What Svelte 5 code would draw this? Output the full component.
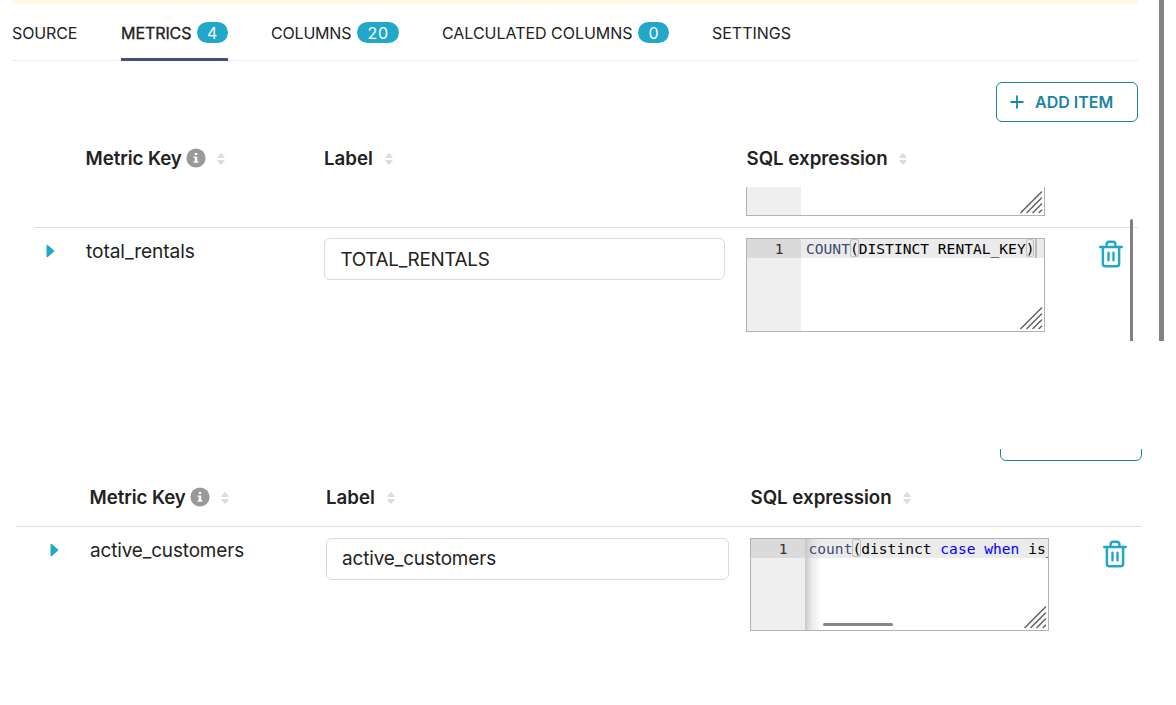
<script>
  const tabs = [
    { name: 'SOURCE', width: 65.4 },
    { name: 'METRICS', count: 4, active: true, width: 70.5 },
    { name: 'COLUMNS', count: 20, width: 80.5 },
    { name: 'CALCULATED COLUMNS', count: 0, width: 190.5 },
    { name: 'SETTINGS', width: 79 },
  ];
  const columns = ['Metric Key', 'Label', 'SQL expression'];
  const first = {
    key: 'total_rentals',
    label: 'TOTAL_RENTALS',
    code: [['fn', 'COUNT'], ['paren', '('], ['', 'DISTINCT RENTAL_KEY'], ['paren', ')']],
    cursor: true,
  };
  const second = {
    key: 'active_customers',
    label: 'active_customers',
    code: [['fn', 'count'], ['paren', '('], ['', 'distinct '], ['kw', 'case'], ['', ' '], ['kw', 'when'], ['', ' is_']],
    scrolled: true,
  };
</script>

{#snippet grip()}
  <svg class="grip" width="24" height="24" viewBox="0 0 24 24">
    <path d="M1 21.5 21.5 1M7 21.5 21.5 7M13 21.5 21.5 13M19.2 21.5 21.5 19.2" />
  </svg>
{/snippet}

{#snippet header()}
  <div class="grid header">
    <span></span>
    {#each columns as name, i}
      <div class="th">
        <span class:tight={i === 0}>{name}</span>
        {#if i === 0}
          <svg class="info" width="20" height="20" viewBox="0 0 20 20">
            <circle cx="10" cy="10" r="9.6" fill="#999" />
            <path d="M8.8 5h2.4v2.1H8.8zM7.6 8.4h3.6v4.8h1.2v1.5H7.6v-1.5h1.2V9.9H7.6z" fill="#fff" />
          </svg>
        {/if}
        <svg class="sort" width="8" height="12" viewBox="0 0 8 12">
          <path d="M4 0 7.5 3.8Q8 5 7 5H1Q0 5 .5 3.8zM4 12 7.5 8.2Q8 7 7 7H1Q0 7 .5 8.2z" fill="#dcdcdc" />
        </svg>
      </div>
    {/each}
  </div>
{/snippet}

{#snippet row(metric)}
  <div class="grid row">
    <svg class="caret" width="9" height="14" viewBox="0 0 9 14">
      <path d="M.5 1.8Q.5.2 1.8 1L7.8 6.2Q8.6 7 7.8 7.8L1.8 13Q.5 13.8.5 12.2z" fill="#20a7c9" />
    </svg>
    <span class="key">{metric.key}</span>
    <div class="input">{metric.label}</div>
    <div class="editor">
      <div class="gutter"><span class="num">1</span></div>
      <div class="code" class:scrolled={metric.scrolled}>
        <div class="line">{#each metric.code as [kind, text]}<span class={kind}>{text}</span>{/each}{#if metric.cursor}<i class="cursor"></i>{/if}</div>
        {#if metric.scrolled}<div class="hbar"></div>{/if}
      </div>
      {@render grip()}
    </div>
    <svg class="trash" width="24" height="28" viewBox="0 0 24 28">
      <g fill="none" stroke="#20a7c9" stroke-linecap="round" stroke-linejoin="round">
        <path d="M1.2 7H22.8" stroke-width="2.4" />
        <path d="M3.9 7V23.8Q3.9 26.3 6.4 26.3H17.6Q20.1 26.3 20.1 23.8V7" stroke-width="2.5" />
        <path d="M7.6 6.5V4.5Q7.6 1.7 10.2 1.7H13.8Q16.4 1.7 16.4 4.5V6.5" stroke-width="2.4" />
        <path d="M9.5 12.8V20.2M14.5 12.8V20.2" stroke-width="2.4" />
      </g>
    </svg>
  </div>
{/snippet}

<div class="page">
  <section class="top">
    <div class="main">
      <div class="banner"></div>
      <nav>
        {#each tabs as tab}
          <div class="tab" class:active={tab.active}>
            <svg class="name" height="24" style:width="{tab.width}px"><text x="0" y="19.5" textLength={tab.width}>{tab.name}</text></svg>
            {#if tab.count !== undefined}<span class="badge">{tab.count}</span>{/if}
          </div>
        {/each}
      </nav>
      <div class="actions">
        <button class="add">
          <svg width="14" height="14" viewBox="0 0 14 14"><path d="M7 .5V13.5M.5 7H13.5" stroke="#1a85a0" stroke-width="1.8" /></svg>
          <span>ADD ITEM</span>
        </button>
      </div>
      {@render header()}
      <div class="rows">
        <div class="grid partial">
          <div class="editor stub"><div class="gutter"></div>{@render grip()}</div>
        </div>
        {@render row(first)}
      </div>
    </div>
    <div class="vbar"></div>
    <div class="pagebar"></div>
  </section>

  <section class="bottom">
    <div class="cut"><div class="add"></div></div>
    {@render header()}
    {@render row(second)}
  </section>
</div>

<style>
  :global(body) { margin: 0; background: #fff; }
  .page {
    width: 1176px; height: 705px; overflow: hidden; background: #fff;
    font-family: Inter, sans-serif; color: #222; display: flex; flex-direction: column; gap: 108px;
  }
  .page * { box-sizing: border-box; }
  svg { display: block; flex: none; }
  .top { height: 341px; position: relative; display: flex; flex: none; overflow: hidden; justify-content: space-between; padding-right: 12px; }
  .main { width: 1138px; }
  .banner { height: 4px; margin-left: 12px; background: #fff8e3; border-radius: 0 0 3px 3px; }
  nav { height: 57px; margin-left: 12px; border-bottom: 1px solid #ebebeb; display: flex; gap: 43px; }
  .tab { height: 57px; display: flex; align-items: center; gap: 5.8px; flex: none; border-bottom: 3px solid transparent; }
  .tab:first-child { margin-right: .2px; }
  .tab.active { border-color: #444e7c; }
  .name { overflow: visible; }
  .name text { font-size: 16px; fill: #222; }
  .active .name text { stroke: #222; stroke-width: .35px; }
  .badge { height: 21px; min-width: 31px; border-radius: 11px; padding: 0 10px; background: #20a7c9; color: #fff; font-size: 16px; line-height: 22px; letter-spacing: .9px; text-align: center; margin-top: 2px; }
  .actions { padding-top: 21px; display: flex; justify-content: flex-end; }
  .add { width: 142px; height: 40px; flex: none; margin: 0; padding: 0 0 0 13px; border: 1px solid #1a85a0; border-radius: 6px; background: #fff; color: #1a85a0; display: flex; align-items: center; gap: 11px; font: 600 16px Inter, sans-serif; }
  .grid { display: grid; grid-template-columns: 52px 238px 422px 299px 1fr; align-items: start; margin-left: 34px; }
  .header { height: 65px; padding-top: 24px; }
  .th { display: flex; align-items: center; height: 24px; font-size: 18.7px; font-weight: 600; line-height: 24px; white-space: nowrap; }
  .th > span { padding-top: 2px; }
  .th:nth-child(4) > span { margin: 0 -.5px 0 .5px; }
  .tight { letter-spacing: -.1px; margin-left: -.4px; }
  .info { margin-left: 4px; }
  .sort { margin: 2px 0 0 12px; }
  .info + .sort { margin-left: 11px; }
  .rows { height: 154px; overflow: hidden; }
  .partial { height: 41px; border-bottom: 1px solid #dedede; }
  .row { padding-top: 10px; }
  .caret { margin: 6px 0 0 12px; }
  .key { font-size: 19.2px; line-height: 26px; letter-spacing: -.1px; }
  .input { width: 401px; height: 42px; border: 1px solid #d9d9e3; border-radius: 6px; padding-left: 15.5px; font-size: 18.9px; line-height: 42px; letter-spacing: -.33px; }
  .editor { width: 299px; height: 94px; border: 1px solid #b2b2b2; position: relative; display: flex; overflow: hidden; font: 14.6px/19px "DejaVu Sans Mono", monospace; }
  .stub { grid-column: 4; height: 29px; border-top: 0; }
  .gutter { width: 54px; background: #efefef; flex: none; }
  .num { display: block; height: 19px; line-height: 20px; padding-right: 17.5px; text-align: right; background: #dadada; color: #333; }
  .code { flex: 1; min-width: 0; overflow: hidden; position: relative; padding: 0; }
  .line { height: 19px; background: #ebebeb; padding-left: 5px; white-space: pre; display: flex; line-height: 20px; color: #000; }
  .scrolled { background: linear-gradient(90deg, #c8c8c8, #ececec 7px, #fff 17px); }
  .scrolled .line { padding-left: 3.5px; background: linear-gradient(90deg, #c8c8c8, #e0e0e0 7px, #ebebeb 17px); }
  .fn { color: #3c4c72; }
  .kw { color: #00f; }
  .paren { box-shadow: inset 0 0 0 1px #c0c0c0; border-radius: 3px; height: 18px; }
  .cursor { width: 2px; height: 19px; background: #bbb; margin-left: 1px; }
  .hbar { position: absolute; left: 18px; bottom: 4px; width: 70px; height: 3px; border-radius: 2px; background: #868686; }
  .grip { position: absolute; right: 0; bottom: 0; }
  .grip path { stroke: #666; stroke-width: 1.6; fill: none; stroke-linecap: round; }
  .trash { margin: 2px 0 0 54px; }
  .vbar { position: absolute; left: 1130px; top: 219px; width: 3px; height: 122px; border-radius: 2px 2px 0 0; background: #808080; }
  .pagebar { width: 5px; height: 341px; background: #828282; }
  .bottom { width: 1142px; }
  .cut { height: 12px; display: flex; justify-content: flex-end; align-items: flex-end; overflow: hidden; }
  .bottom .grid { margin-left: 16px; grid-template-columns: 74px 236px 424px 299px 1fr; }
  .bottom .header { height: 66px; border-bottom: 1px solid #dedede; }
  .bottom .row { padding-top: 11px; }
  .bottom .caret { margin: 5px 0 0 34px; }
  .bottom .key { font-size: 18.9px; line-height: 26px; letter-spacing: -.12px; }
  .bottom .input { width: 403px; line-height: 40px; letter-spacing: -.12px; padding-left: 15px; }
  .bottom .editor { height: 93px; }
</style>
